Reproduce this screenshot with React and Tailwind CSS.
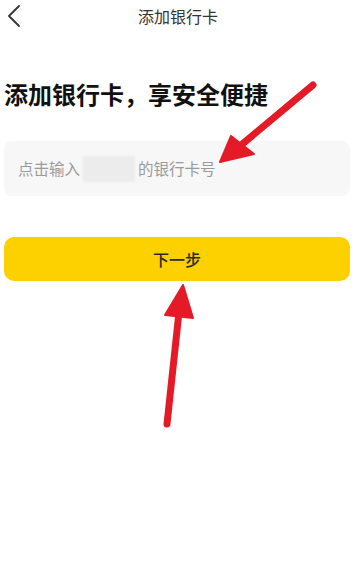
import React from 'react';

const font = { fontFamily: '"Noto Sans CJK SC", "Noto Sans", sans-serif' };

const Arrows = () => (
  <svg className="absolute inset-0 pointer-events-none" width="356" height="576" viewBox="0 0 356 576">
    {/* arrow pointing at the input */}
    <line x1="313" y1="85" x2="240" y2="146" stroke="#e41b27" strokeWidth="7" strokeLinecap="round" />
    <polygon points="220,162 231,136 254,154" fill="#e41b27" stroke="#e41b27" strokeWidth="2" strokeLinejoin="round" />
    {/* arrow pointing at the button */}
    <line x1="167" y1="424" x2="179" y2="312" stroke="#e41b27" strokeWidth="7" strokeLinecap="round" />
    <polygon points="183,285 165,315 193,318" fill="#e41b27" stroke="#e41b27" strokeWidth="2" strokeLinejoin="round" />
  </svg>
);

export default function App() {
  return (
    <div className="relative w-[356px] h-[576px] bg-white overflow-hidden" style={font}>
      <div className="relative h-[31px] flex items-center justify-center">
        <svg className="absolute left-[7px] top-[5px]" width="14" height="22" viewBox="0 0 14 22">
          <path d="M12 1 L2 11 L12 21" fill="none" stroke="#333" strokeWidth="1.8" strokeLinecap="round" strokeLinejoin="round" />
        </svg>
        <span className="text-[16px] text-[#333] leading-none">添加银行卡</span>
      </div>

      <div className="px-[4px]">
        <h1 className="mt-[49px] text-[24px] leading-[28px] font-bold text-[#111]">添加银行卡，享安全便捷</h1>

        <div className="mt-[33px] h-[55px] rounded-[8px] bg-[#f7f7f7] flex items-center pl-[14px] pr-2 mr-[2px]">
          <span className="text-[15.5px] text-[#9a9a9a]">点击输入</span>
          <span className="mx-[3px] w-[52px] h-[26px] bg-[#ececec] rounded-[2px] blur-[1px]" />
          <span className="text-[15.5px] text-[#9a9a9a]">的银行卡号</span>
        </div>

        <button className="mt-[41px] w-[346px] h-[44px] rounded-[10px] bg-[#fdd000] flex items-center justify-center">
          <span className="text-[16px] font-medium text-[#2a2a2a]">下一步</span>
        </button>
      </div>

      <Arrows />
    </div>
  );
}
